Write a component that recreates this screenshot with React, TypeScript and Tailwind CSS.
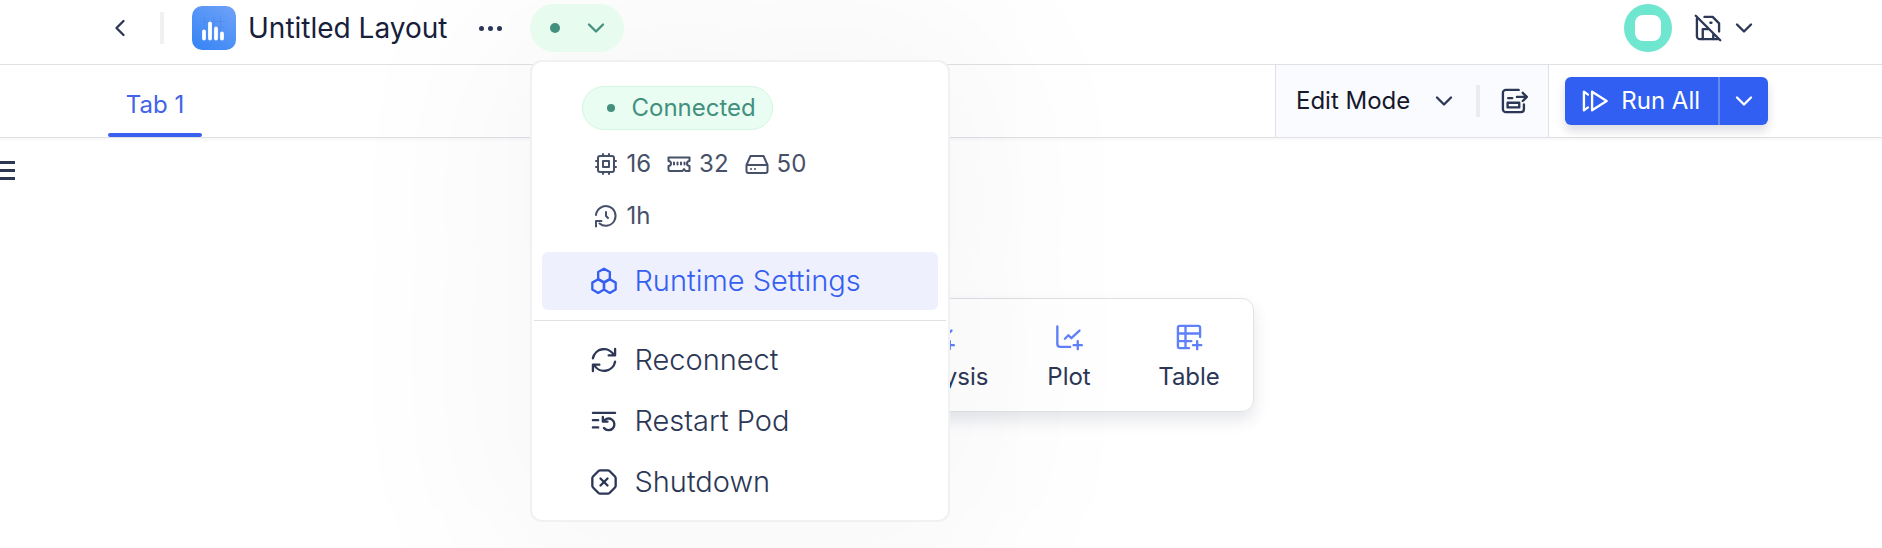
import React from 'react';
import { ChevronDown, ChevronLeft, OctagonX } from 'lucide-react';

const Icon: React.FC<{ className: string; children: React.ReactNode }> = ({ className, children }) => (
  <svg
    viewBox="0 0 24 24"
    fill="none"
    stroke="currentColor"
    strokeWidth="2"
    strokeLinecap="round"
    strokeLinejoin="round"
    className={className}
    aria-hidden="true"
  >
    {children}
  </svg>
);

const CpuIcon = () => (
  <Icon className="size-6">
    <rect x="4" y="4" width="16" height="16" rx="2" />
    <rect x="9" y="9" width="6" height="6" />
    <path d="M9 2v2M15 2v2M9 20v2M15 20v2M2 9h2M2 15h2M20 9h2M20 15h2" />
  </Icon>
);

const MemoryIcon = () => (
  <Icon className="size-6">
    <path d="M1.500 5.500h21v3.500a2.500 2.500 0 0 0 0 5v5h-4l-1.500-2-1.500 2H3a1.500 1.500 0 0 1-1.500-1.500V14a2.500 2.500 0 0 0 0-5z" />
    <path d="M7 10.500v2M10.500 10.500v2M14 10.500v2M17.500 10.500v2" />
  </Icon>
);

const DiskIcon = () => (
  <Icon className="size-6">
    <path d="M1.500 13h21M5.500 4h13L22.500 13v6a2 2 0 0 1-2 2h-17a2 2 0 0 1-2-2v-6z" />
    <path d="M6 17h.01M10 17h.01" />
  </Icon>
);

const HistoryIcon = () => (
  <Icon className="size-6">
    <path d="M2 11a9.800 9.800 0 1 1 3.500 8.500" />
    <path d="M2 22.500V17h5.500M12 8v4l2 2" />
  </Icon>
);

const HexagonsIcon = () => (
  <Icon className="size-7">
    <path d="M12 1.500l5 2.800v5.900l-5 2.800-5-2.800V4.300z" />
    <path d="M7 10.500l5 2.900v5.900l-5 2.900-5-2.900v-5.900z" />
    <path d="M17 10.500l5 2.900v5.900l-5 2.900-5-2.900v-5.900z" />
  </Icon>
);

const ReconnectIcon = () => (
  <Icon className="size-7">
    <path d="M2.500 10.500A9.600 9.600 0 0 1 20.500 8M21.500 2.500V8H16" />
    <path d="M21.500 13.500A9.600 9.600 0 0 1 3.500 16M2.500 21.500V16H8" />
  </Icon>
);

const RestartIcon = () => (
  <Icon className="size-7">
    <path d="M2.500 5h19M2.500 11.300H7M2.500 17.500H7" />
    <path d="M11 8.500v4h4M11.500 12.500A5 5 0 1 1 12 18" />
  </Icon>
);

const SaveOffIcon = () => (
  <Icon className="size-7">
    <path d="M9 2.500h7l5.500 5.500v7M20.500 21.500H5a2.500 2.500 0 0 1-2.500-2.500V4" />
    <path d="M7.500 21.500v-8.500h4M16.500 18v3.500M14 7.500h1M1.500 1.500l21 21" />
  </Icon>
);

const ExportIcon = () => (
  <Icon className="size-7">
    <path d="M16 2.500H5A2.500 2.500 0 0 0 2.500 5v14A2.500 2.500 0 0 0 5 21.500h13a2.500 2.500 0 0 0 2.500-2.500v-4" />
    <path d="M7 9.500h3.500M14.500 8.500H23M19.500 5l3.500 3.500-3.500 3.500" />
    <rect x="6.500" y="13.500" width="10" height="4" />
  </Icon>
);

const RunAllIcon = () => (
  <Icon className="size-7">
    <path d="M9.500 4l12.500 8-12.500 8z" />
    <path d="M6 6.500L2.500 4v16L6 17.500" />
  </Icon>
);

const PlotIcon = () => (
  <Icon className="size-7">
    <path d="M2 3v15a2.500 2.500 0 0 0 2.500 2.500H13M8.500 13.500l3-3 2.500 2.500L21 6.500M19.500 15.500v7M16 19h7" />
  </Icon>
);

const TableIcon = () => (
  <Icon className="size-7">
    <path d="M12 21.500H4A1.500 1.500 0 0 1 2.500 20V4A1.500 1.500 0 0 1 4 2.500h16A1.500 1.500 0 0 1 21.500 4v8M2.500 9h19M2.500 15.500H14M9 2.500v19M19 15.500v7M15.500 19h7" />
  </Icon>
);

const LogoIcon = () => (
  <svg viewBox="0 0 44 44" className="size-11 shrink-0" aria-hidden="true">
    <defs>
      <linearGradient id="logo" x1="1" y1="0" x2="0.300" y2="1">
        <stop offset="0" stopColor="#70a2f8" />
        <stop offset="1" stopColor="#3b87f5" />
      </linearGradient>
    </defs>
    <rect width="44" height="44" rx="10" fill="url(#logo)" />
    <path d="M11 15.500h22M11 21.500h22M12.500 11v20M22 11v20M28.500 11v20" stroke="#4a86e8" strokeWidth="1" opacity="0.600" />
    <path d="M12 25.500v7M18 17.500v15M24 22.500v10M30 27.500v5" stroke="#fff" strokeWidth="3.800" strokeLinecap="round" />
  </svg>
);

const stats = [
  { icon: <CpuIcon />, value: '16', label: 'CPU cores' },
  { icon: <MemoryIcon />, value: '32', label: 'Memory' },
  { icon: <DiskIcon />, value: '50', label: 'Disk' },
  { icon: <HistoryIcon />, value: '1h', label: 'Idle timeout' },
];

const actions = [
  { icon: <ReconnectIcon />, label: 'Reconnect' },
  { icon: <RestartIcon />, label: 'Restart Pod' },
  { icon: <OctagonX className="size-7" />, label: 'Shutdown' },
];

const RuntimeMenu = () => (
  <div
    role="menu"
    className="absolute top-full left-0 z-10 mt-2 w-[420px] rounded-xl border-2 border-[#f0f1f3] bg-white pt-6 pb-2 shadow-[0_0_180px_50px_rgba(40,40,50,0.035)]"
  >
    <div className="ml-[50px] flex h-11 w-fit items-center gap-4 rounded-full border border-[#d0f7e2] bg-[#eafdf2] pr-4 pl-6 text-2xl text-[#43907f]">
      <span className="size-2 rounded-full bg-[#43907f]" />
      Connected
    </div>
    <ul className="mt-2 ml-[62px] flex w-64 flex-wrap gap-x-4 text-2xl text-[#475069]">
      {stats.map(stat => (
        <li key={stat.value} title={stat.label} className="flex h-13 items-center gap-2">
          {stat.icon}
          {stat.value}
        </li>
      ))}
    </ul>
    <button role="menuitem" className="mx-2.5 mt-2.5 flex h-[58px] w-[396px] items-center gap-4 rounded-md bg-[#eef0fe] pl-12 text-[29px] font-[350] text-[#355ff0]">
      <HexagonsIcon />
      Runtime Settings
    </button>
    <div className="mx-0.5 mt-2.5 mb-2 h-px bg-[#dfe1e5]" />
    {actions.map(action => (
      <button key={action.label} role="menuitem" className="mx-2.5 flex h-[61px] w-[396px] items-center gap-4 pl-12 text-[29px] font-[350] text-[#2b3755]">
        {action.icon}
        {action.label}
      </button>
    ))}
  </div>
);

const Header = () => (
  <header className="flex h-[65px] items-start justify-between border-b border-[#dfe1e5] pr-[114px] pl-[108px]">
    <div className="flex h-14 items-center">
      <button aria-label="Back" className="text-[#2b3755]">
        <ChevronLeft className="-mx-0.5 size-7" />
      </button>
      <span className="ml-7 h-8 w-1 bg-[#eff0f1]" />
      <span className="ml-7">
        <LogoIcon />
      </span>
      <h1 className="ml-3 text-[28px] text-[#17203b]">Untitled Layout</h1>
      <button aria-label="More" className="ml-8 flex gap-1 text-[#2b3755]">
        <span className="size-[5px] rounded-full bg-current" />
        <span className="size-[5px] rounded-full bg-current" />
        <span className="size-[5px] rounded-full bg-current" />
      </button>
      <div className="relative ml-7">
        <button aria-label="Runtime status" className="relative z-20 flex h-12 w-[94px] items-center justify-between rounded-full bg-[#e7fcee] pr-4 pl-5 text-[#43907f]">
          <span className="size-2.5 rounded-full bg-current" />
          <ChevronDown className="-mx-0.5 size-7" />
        </button>
        <RuntimeMenu />
      </div>
    </div>
    <div className="flex h-14 items-center text-[#2b3755]">
      <button aria-label="Account" className="flex size-12 items-center justify-center rounded-full bg-[#6fe6cf]">
        <span className="size-6.5 rounded-lg bg-white" />
      </button>
      <button aria-label="Autosave off" className="ml-5.5 flex items-center gap-2.5 pr-3">
        <SaveOffIcon />
        <ChevronDown className="-mx-0.5 size-7" />
      </button>
    </div>
  </header>
);

const TabBar = () => (
  <nav className="flex h-[73px] items-stretch border-b border-[#dfe1e5] pr-[114px] pl-[108px] shadow-[0_2px_3px_rgba(40,50,80,0.04)]">
    <button className="flex w-[94px] flex-col items-center justify-end gap-3 text-2xl text-[#4263ea]">
      Tab 1
      <span className="h-1 w-full rounded-full bg-[#3a60f0]" />
    </button>
    <div className="ml-auto flex items-center border-x border-[#dfe1e5] bg-[#fafbfe] px-5 text-[#2b3755]">
      <button className="flex items-center gap-5.5 text-2xl text-[#17182b]">
        Edit Mode
        <ChevronDown className="-mx-0.5 size-7 text-[#2b3755]" />
      </button>
      <span className="ml-5 h-8 w-1 bg-[#ebecef]" />
      <button aria-label="Publish" className="ml-5">
        <ExportIcon />
      </button>
    </div>
    <div className="ml-4 flex h-12 self-center rounded-md bg-[#305ff1] text-2xl text-white shadow-[0_6px_10px_rgba(20,30,60,0.15)]">
      <button className="flex items-center gap-3 border-r-2 border-[#6489f5] pr-4.5 pl-4">
        <RunAllIcon />
        Run All
      </button>
      <button aria-label="Run options" className="flex w-12 items-center justify-center">
        <ChevronDown className="-mx-0.5 size-7" />
      </button>
    </div>
  </nav>
);

const cells = [
  { icon: <PlotIcon />, label: 'Analysis', width: 'w-34' },
  { icon: <PlotIcon />, label: 'Plot', width: 'w-30' },
  { icon: <TableIcon />, label: 'Table', width: 'w-30' },
];

const App: React.FC = () => {
  return (
    <div className="min-h-screen w-full overflow-hidden bg-white font-['Inter',sans-serif]">
      <Header />
      <TabBar />
      <main>
        <button aria-label="Open sidebar" className="mt-[23px] flex w-[15px] flex-col gap-[5px] text-[#2b3755]">
          <span className="h-[3px] w-full bg-current" />
          <span className="h-[3px] w-full bg-current" />
          <span className="h-[3px] w-full bg-current" />
        </button>
        <div className="mx-auto mt-[118px] flex h-[114px] w-[626px] justify-end rounded-xl border border-[#dfe1e5] pr-1 text-2xl text-[#2b3755] shadow-[0_8px_16px_rgba(40,50,80,0.12)]">
          {cells.map(cell => (
            <button key={cell.label} className={`flex ${cell.width} flex-col items-center justify-center gap-2.5 pt-1.5`}>
              <span className="text-[#5f80f8]">{cell.icon}</span>
              {cell.label}
            </button>
          ))}
        </div>
      </main>
    </div>
  );
};

export default App;
